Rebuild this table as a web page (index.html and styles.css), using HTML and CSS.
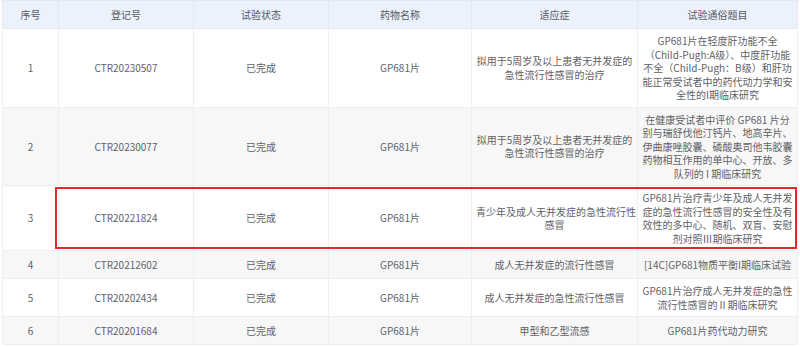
FILE: index.html
```html
<!DOCTYPE html>
<html lang="zh-CN">
<head>
<meta charset="utf-8">
<title>临床试验列表</title>
<link rel="stylesheet" href="styles.css">
</head>
<body>
<div class="wrap">
  <table class="trials">
    <colgroup>
      <col class="c-no"><col class="c-reg"><col class="c-status"><col class="c-drug"><col class="c-ind"><col class="c-title">
    </colgroup>
    <thead>
      <tr><th>序号</th><th>登记号</th><th>试验状态</th><th>药物名称</th><th>适应症</th><th>试验通俗题目</th></tr>
    </thead>
    <tbody>
      <tr>
        <td>1</td><td>CTR20230507</td><td>已完成</td><td>GP681片</td>
        <td class="nw">拟用于5周岁及以上患者无并发症的<br>急性流行性感冒的治疗</td>
        <td class="nw">GP681片在轻度肝功能不全<br>（Child-Pugh:A级）、中度肝功能<br>不全（Child-Pugh：B级）和肝功<br>能正常受试者中的药代动力学和安<br>全性的I期临床研究</td>
      </tr>
      <tr class="alt">
        <td>2</td><td>CTR20230077</td><td>已完成</td><td>GP681片</td>
        <td class="nw">拟用于5周岁及以上患者无并发症的<br>急性流行性感冒的治疗</td>
        <td class="nw">在健康受试者中评价 GP681 片分<br>别与瑞舒伐他汀钙片、地高辛片、<br>伊曲康唑胶囊、磷酸奥司他韦胶囊<br>药物相互作用的单中心、开放、多<br>队列的 I 期临床研究</td>
      </tr>
      <tr>
        <td>3</td><td>CTR20221824</td><td>已完成</td><td>GP681片</td>
        <td class="nw">青少年及成人无并发症的急性流行性<br>感冒</td>
        <td class="nw">GP681片治疗青少年及成人无并发<br>症的急性流行性感冒的安全性及有<br>效性的多中心、随机、双盲、安慰<br>剂对照Ⅲ期临床研究</td>
      </tr>
      <tr class="alt">
        <td>4</td><td>CTR20212602</td><td>已完成</td><td>GP681片</td>
        <td class="nw">成人无并发症的流行性感冒</td>
        <td class="nw">[14C]GP681物质平衡I期临床试验</td>
      </tr>
      <tr>
        <td>5</td><td>CTR20202434</td><td>已完成</td><td>GP681片</td>
        <td class="nw">成人无并发症的急性流行性感冒</td>
        <td class="nw">GP681片治疗成人无并发症的急性<br>流行性感冒的Ⅱ期临床研究</td>
      </tr>
      <tr class="alt">
        <td>6</td><td>CTR20201684</td><td>已完成</td><td>GP681片</td>
        <td class="nw">甲型和乙型流感</td>
        <td class="nw">GP681片药代动力研究</td>
      </tr>
    </tbody>
  </table>
  <div class="highlight"></div>
</div>
</body>
</html>
```
FILE: styles.css
```css
html, body {
  margin: 0;
  padding: 0;
  background: #ffffff;
}
body {
  font-family: "Noto Sans CJK SC", "Noto Sans", "Liberation Sans", sans-serif;
  font-size: 10px;
  color: #606266;
}
.wrap {
  position: relative;
  padding: 0 3px 0 2px;
}
.trials {
  width: 795px;
  table-layout: fixed;
  border-collapse: collapse;
}
.c-no { width: 56px; }
.c-reg { width: 135px; }
.c-status { width: 135px; }
.c-drug { width: 143px; }
.c-ind { width: 166px; }
.c-title { width: 160px; }
.trials tr { height: 28px; }
.trials th,
.trials td {
  border: 1px solid #ebeef5;
  text-align: center;
  vertical-align: middle;
  padding: 5px 4px;
  line-height: 13.5px;
}
.trials th {
  background: #ebf2fc;
  font-weight: normal;
  color: #555a63;
  border-color: #e3e9f2;
}
.trials td.nw { white-space: nowrap; }
.trials tr.alt td { background: #f7f7f7; }
.highlight {
  position: absolute;
  left: 55px;
  top: 187px;
  width: 738px;
  height: 58px;
  border: 2px solid #e8262a;
  pointer-events: none;
}
```
